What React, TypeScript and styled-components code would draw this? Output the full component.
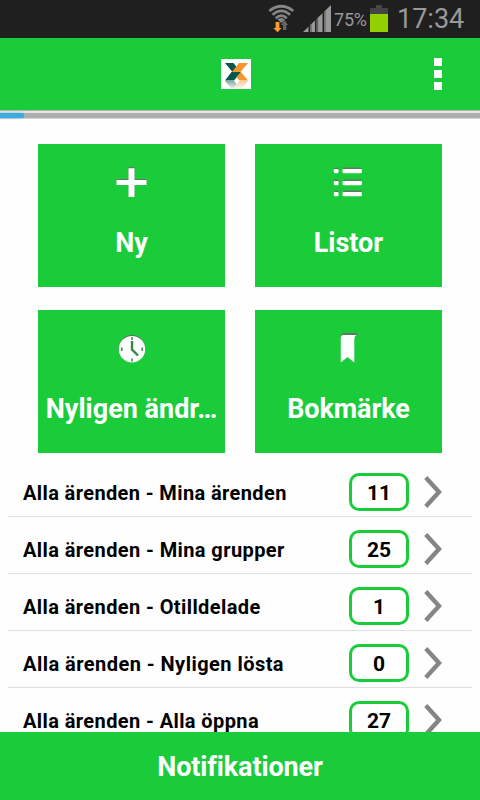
import React from "react";
import styled, { createGlobalStyle } from "styled-components";

const GREEN = "#1acc3a";

const GlobalStyle = createGlobalStyle`
  body { margin: 0; background: #fff; }
  * { box-sizing: border-box; }
`;

const Screen = styled.div`
  width: 480px;
  height: 800px;
  overflow: hidden;
  display: flex;
  flex-direction: column;
  background: #fefefe;
  font-family: Roboto, "Liberation Sans", sans-serif;
`;

const StatusBar = styled.div`
  height: 38px;
  flex: none;
  display: flex;
  align-items: flex-start;
  background: #1f1f1f;
  color: #999;
  padding-left: 268px;
`;

const BatteryLevel = styled.span`
  width: 37px;
  padding-left: 2px;
  font-size: 18px;
  line-height: 40px;
  letter-spacing: -0.2px;
`;

const Time = styled.span`
  font-size: 27px;
  line-height: 38px;
  margin-left: 8px;
`;

const ActionBar = styled.header`
  height: 72px;
  flex: none;
  display: flex;
  align-items: center;
  background: ${GREEN};
  padding: 0 38px 0 221px;
  justify-content: space-between;
`;

const OverflowMenu = styled.div`
  display: flex;
  flex-direction: column;
  gap: 4px;
`;

const Dot = styled.i`
  width: 8px;
  height: 8px;
  background: #fff;
`;

const Progress = styled.div`
  height: 9px;
  flex: none;
  padding-top: 3px;
  background: linear-gradient(#b4b4b4 0 1px, #e4e4e4 1px 3px, #adadad 3px 8px, #d6d6d6 8px 9px);
`;

const ProgressFill = styled.div`
  width: 24px;
  height: 5px;
  background: #3dade0;
  box-shadow: -2px 0 3px rgba(61, 173, 224, 0.6);
`;

const Tiles = styled.div`
  display: grid;
  grid-template-columns: 187px 187px;
  grid-auto-rows: 143px;
  gap: 23px 30px;
  padding: 25px 38px 7px;
`;

const Tile = styled.div`
  display: flex;
  flex-direction: column;
  align-items: center;
  background: ${GREEN};
  padding: 20px 7px 0;
  color: #fff;
`;

const TileLabel = styled.span<{ $track: number }>`
  margin-top: 25px;
  font-size: 27px;
  line-height: 32px;
  font-weight: 700;
  white-space: nowrap;
  letter-spacing: ${(p) => p.$track}px;
`;

const List = styled.ul`
  flex: 1;
  min-height: 0;
  overflow: hidden;
  margin: 0;
  padding: 0 8px;
  list-style: none;
`;

const Row = styled.li`
  height: 57px;
  display: flex;
  align-items: flex-start;
  padding: 13px 29px 0 15px;
  border-bottom: 1px solid #e0e0e0;
`;

const RowLabel = styled.span<{ $track: number }>`
  flex: 1;
  font-size: 20px;
  line-height: 40px;
  font-weight: 700;
  color: #000;
  white-space: nowrap;
  letter-spacing: ${(p) => p.$track}px;
`;

const Count = styled.span`
  width: 60px;
  height: 38px;
  border: 3px solid ${GREEN};
  border-radius: 10px;
  background: #fff;
  font-size: 21px;
  line-height: 34px;
  font-weight: 700;
  color: #000;
  text-align: center;
  margin-right: 14px;
`;

const Footer = styled.footer`
  height: 68px;
  flex: none;
  background: ${GREEN};
  color: #fff;
  font-size: 27px;
  font-weight: 700;
  line-height: 71px;
  letter-spacing: -0.15px;
  text-align: center;
`;

const SignalIcons = () => (
  <svg width="64" height="38" viewBox="268 0 64 38">
    <g fill="none" stroke="#858585" strokeWidth="2.8">
      <path d="M269.3 11Q281.3 1.5 293.3 11" />
      <path d="M272.6 14.8Q281.3 7 290 14.8" />
      <path d="M275.8 18.2Q281.3 13 286.8 18.2" />
    </g>
    <path d="M277.5 19.5Q281.3 16.5 285 19.5L281.3 23z" fill="#858585" />
    <path d="M275.6 22h3.8v6h2.2l-4.1 4.3-4.1-4.3h2.2z" fill="#ff9d2e" />
    <path d="M283 30h3.4v-5h1.6l-3.4-5-3.6 5h2z" fill="#666" />
    <path d="M303 32L331 5V32z" fill="#999" />
    <path d="M309.3 25v7M315.8 19v13M323.3 11v21" stroke="#1f1f1f" strokeWidth="1.5" />
    <path d="M311 24.5v7.5M317.7 18v14M325 11v21" stroke="#555" strokeWidth="1" />
  </svg>
);

const Battery = () => (
  <svg width="20" height="38" viewBox="370 0 20 38">
    <path d="M377 5h6v3h6v6h-18V8h6z" fill="#454545" />
    <path d="M371 14h18v18h-18z" fill="#92d000" />
  </svg>
);

const Logo = () => (
  <svg width="30" height="30" viewBox="0 0 30 30">
    <defs>
      <linearGradient id="fade" x2="0" y2="1">
        <stop stopColor="#fff" stopOpacity=".5" />
        <stop offset="1" stopColor="#fff" stopOpacity=".95" />
      </linearGradient>
    </defs>
    <path fill="#fff" d="M0 0h30v30H0z" />
    <path d="M4 4h8.5L16 8.5 11.5 13z" fill="#07574d" />
    <path d="M10.5 13h9.5l-7 8.5H4z" fill="#07574d" />
    <path d="M18 4h9l-7.5 9H11z" fill="#f6952b" />
    <path d="M20 13l7 8.5h-8.5L15.5 18z" fill="#f6952b" />
    <path d="M4 22h9l6 7h-9z" fill="#07574d" />
    <path d="M18.5 22H27l-6.5 7.5H12z" fill="#f6952b" />
    <path fill="url(#fade)" d="M1 22h28v8H1z" />
  </svg>
);

const PlusIcon = () => (
  <svg width="38" height="38" viewBox="0.5 0 38 38">
    <path d="M16 3h6v12h12v5H22v12h-6V20H4v-5h12z" fill="#5e7a62" />
    <path d="M16 4.2h6V16h12v5H22v12h-6V21H4v-5h12z" fill="#fff" />
  </svg>
);

const ListIcon = () => (
  <svg width="38" height="38" viewBox="0.5 0 38 38">
    {[4, 16, 27].map((y) => (
      <g key={y}>
        <path d={`M5 ${y + 0.5}h4M14 ${y + 0.5}h18`} stroke="#5e7a62" strokeWidth="2" />
        <rect x="4.3" y={y + 1} width="4.7" height="4.2" rx="1.3" fill="#fff" />
        <rect x="13" y={y + 1} width="19.4" height="4.2" rx="1" fill="#fff" />
      </g>
    ))}
  </svg>
);

const ClockIcon = () => (
  <svg width="38" height="38" viewBox="0 0 38 38">
    <circle cx="19" cy="18.3" r="13.3" fill="#5e6f60" />
    <circle cx="19" cy="19.2" r="13.2" fill="#fff" />
    <path d="M19 7v3M19 28.5v3M8.8 17.5v3.5M29.2 17.5v3.5" stroke="#3a9c4c" strokeWidth="1.6" />
    <path d="M19 11v8.5l6 6" fill="none" stroke="#2f8b42" strokeWidth="2.4" />
  </svg>
);

const BookmarkIcon = () => (
  <svg width="38" height="38" viewBox="0 0 38 38">
    <path d="M10.5 7Q11 3 14 3h13.5l-1 3h-3z" fill="#5e7a62" />
    <path d="M10.8 8Q10.8 5 13.5 5H26.5Q24.3 6 24.3 9v23.5L17.5 27l-6.7 5.5z" fill="#fff" />
  </svg>
);

const Chevron = () => (
  <svg width="20" height="38" viewBox="0 0 20 38">
    <path d="M2.8 4.5L16 19 2.8 33.5" fill="none" stroke="#858585" strokeWidth="4.4" />
  </svg>
);

const tiles = [
  { label: "Ny", track: 0, Icon: PlusIcon },
  { label: "Listor", track: 0, Icon: ListIcon },
  { label: "Nyligen ändr…", track: 0, Icon: ClockIcon },
  { label: "Bokmärke", track: -0.1, Icon: BookmarkIcon },
];

const rows = [
  { label: "Alla ärenden - Mina ärenden", count: 11, track: 0.38 },
  { label: "Alla ärenden - Mina grupper", count: 25, track: 0.4 },
  { label: "Alla ärenden - Otilldelade", count: 1, track: 0.4 },
  { label: "Alla ärenden - Nyligen lösta", count: 0, track: 0.46 },
  { label: "Alla ärenden - Alla öppna", count: 27, track: 0.4 },
];

export default function App() {
  return (
    <Screen>
      <GlobalStyle />
      <StatusBar>
        <SignalIcons />
        <BatteryLevel>75%</BatteryLevel>
        <Battery />
        <Time>17:34</Time>
      </StatusBar>
      <ActionBar>
        <Logo />
        <OverflowMenu>
          <Dot />
          <Dot />
          <Dot />
        </OverflowMenu>
      </ActionBar>
      <Progress>
        <ProgressFill />
      </Progress>
      <Tiles>
        {tiles.map(({ label, track, Icon }) => (
          <Tile key={label}>
            <Icon />
            <TileLabel $track={track}>{label}</TileLabel>
          </Tile>
        ))}
      </Tiles>
      <List>
        {rows.map((r) => (
          <Row key={r.label}>
            <RowLabel $track={r.track}>{r.label}</RowLabel>
            <Count>{r.count}</Count>
            <Chevron />
          </Row>
        ))}
      </List>
      <Footer>Notifikationer</Footer>
    </Screen>
  );
}
